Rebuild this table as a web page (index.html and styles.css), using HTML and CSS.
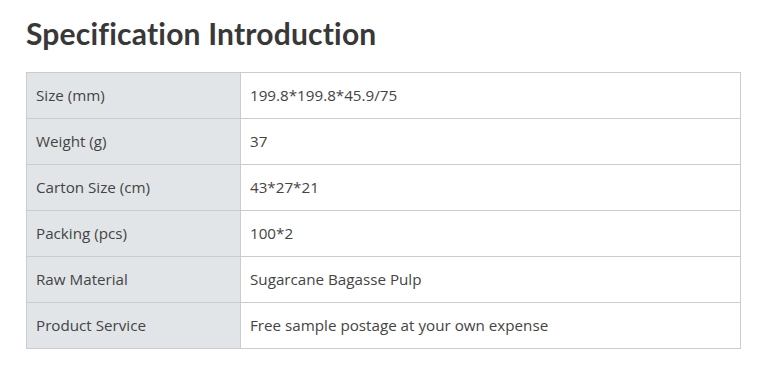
FILE: index.html
```html
<!DOCTYPE html>
<html>
<head>
<meta charset="utf-8">
<link rel="stylesheet" href="styles.css">
</head>
<body>
<div class="spec">
  <h2 class="spec-title">Specification Introduction</h2>
  <table class="spec-table">
    <tr><td class="key">Size (mm)</td><td class="val">199.8*199.8*45.9/75</td></tr>
    <tr><td class="key">Weight (g)</td><td class="val">37</td></tr>
    <tr><td class="key">Carton Size (cm)</td><td class="val">43*27*21</td></tr>
    <tr><td class="key">Packing (pcs)</td><td class="val">100*2</td></tr>
    <tr><td class="key">Raw Material</td><td class="val">Sugarcane Bagasse Pulp</td></tr>
    <tr><td class="key">Product Service</td><td class="val">Free sample postage at your own expense</td></tr>
  </table>
</div>
</body>
</html>
```
FILE: styles.css
```css
html, body {
  margin: 0;
  padding: 0;
  background: #fff;
}
.spec {
  padding: 14px 31px 0 26px;
  font-family: "Open Sans", "Liberation Sans", sans-serif;
  color: #444444;
}
.spec-title {
  margin: 0 0 20px 0;
  font-family: "Lato", "Liberation Sans", sans-serif;
  font-size: 30px;
  font-weight: 700;
  line-height: 38px;
  color: #383838;
  letter-spacing: 0.2px;
}
.spec-table {
  width: 715px;
  border-collapse: collapse;
  font-size: 15.2px;
}
.spec-table td {
  border: 1px solid #cccccc;
  height: 43px;
  padding: 0 9px 2px 9px;
  vertical-align: middle;
}
.spec-table .key {
  width: 195px;
  background: #e1e5e8;
}
.spec-table .val {
  background: #fff;
}
```
